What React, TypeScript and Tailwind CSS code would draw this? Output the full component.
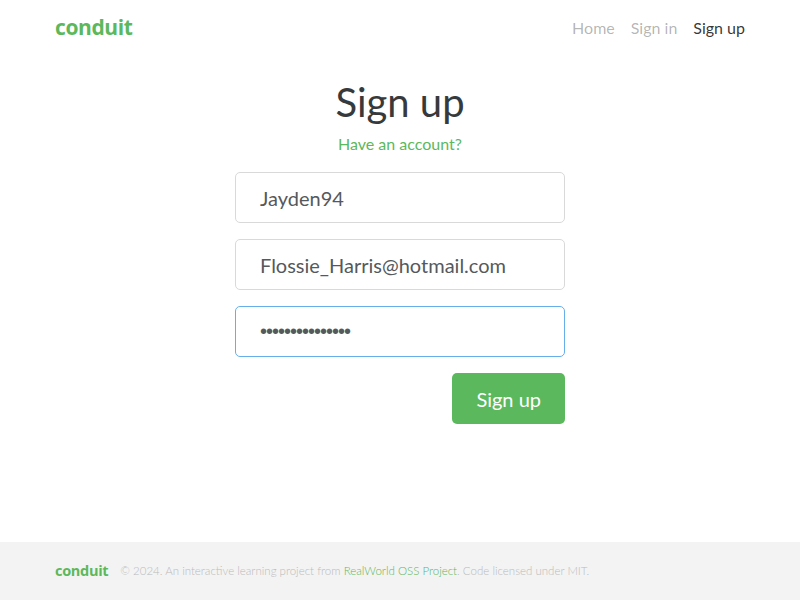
import { useState } from "react";

const body = "font-['Lato','Noto_Sans',sans-serif]";
const logo = "font-['Open_Sans','Noto_Sans',sans-serif]";

function Field({
  value,
  type = "text",
  focused = false,
}: {
  value: string;
  type?: string;
  focused?: boolean;
}) {
  const [v, setV] = useState(value);
  const isPassword = type === "password";
  return (
    <input
      type={type}
      value={v}
      autoFocus={focused}
      onChange={(e) => setV(e.target.value)}
      className={`mb-4 block h-[51px] w-full rounded-[5px] border bg-white px-6 text-[20px] text-[#55595c] caret-[#222] outline-none ${
        focused ? "border-[#66afe9]" : "border-[#d9d9d9]"
      } ${isPassword ? "font-['Liberation_Sans',sans-serif] tracking-[-1px]" : body}`}
    />
  );
}

export default function App() {
  return (
    <div className={`flex min-h-[600px] flex-col bg-white ${body}`}>
      {/* Top navigation */}
      <nav className="mx-auto flex h-[55px] w-[690px] items-center justify-between">
        <a className={`${logo} text-[21px] font-bold tracking-[-0.4px] text-[#5cb85c]`}>conduit</a>
        <ul className="flex gap-4 text-[16px]">
          <li className="text-black/30">Home</li>
          <li className="text-black/30">Sign in</li>
          <li className="text-black/80">Sign up</li>
        </ul>
      </nav>

      {/* Auth form */}
      <main className="mx-auto w-[330px] flex-1 pt-[25px]">
        <h1 className="mb-2 text-center text-[40px] leading-[44px] text-[#373a3c]">Sign up</h1>
        <p className="mb-4 text-center text-[16px] leading-6 text-[#5cb85c]">Have an account?</p>
        <form onSubmit={(e) => e.preventDefault()}>
          <Field value="Jayden94" />
          <Field value="Flossie_Harris@hotmail.com" />
          <Field value="passwordpasswor" type="password" focused />
          <div className="flex justify-end">
            <button className="h-[51px] rounded-[5px] bg-[#5cb85c] px-6 text-[20px] text-white">
              Sign up
            </button>
          </div>
        </form>
      </main>

      {/* Footer */}
      <footer className="h-[58px] bg-[#f3f3f3]">
        <div className="mx-auto flex h-full w-[690px] items-center">
          <span className={`${logo} mr-[12px] text-[14.5px] font-bold tracking-[-0.3px] text-[#5cb85c]`}>
            conduit
          </span>
          <span className="text-[11.5px] font-light text-[#bbb]">
            © 2024. An interactive learning project from{" "}
            <a className="text-[#5cb85c]">RealWorld OSS Project</a>. Code licensed under MIT.
          </span>
        </div>
      </footer>
    </div>
  );
}
